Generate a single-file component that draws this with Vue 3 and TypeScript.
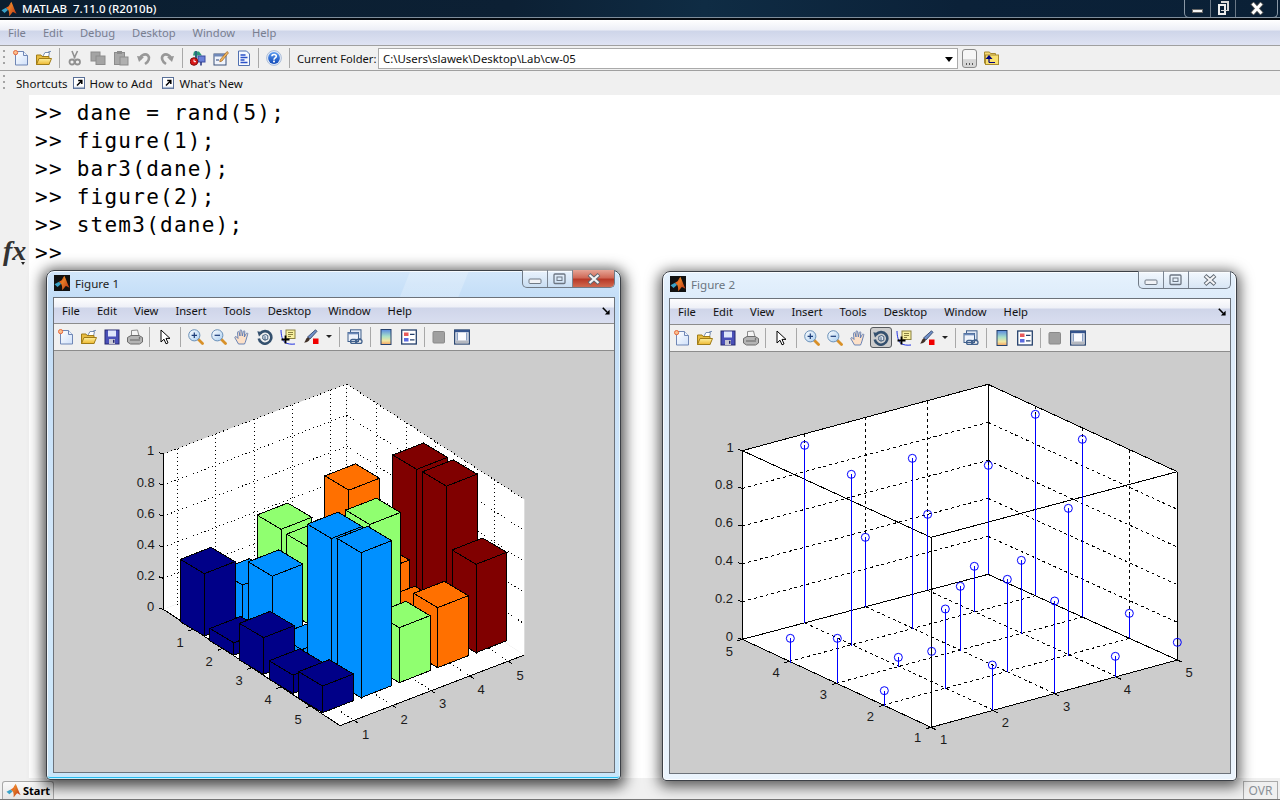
<script setup lang="ts">
type P = [number, number];
interface Tool { k: 'i' | 's' | 'c'; id: string; active?: boolean }

const parseTools = (s: string, active = ''): Tool[] =>
  s.split(' ').map((id) => {
    if (id === '|') return { k: 's', id };
    if (id === 'caret') return { k: 'c', id };
    return { k: 'i', id, active: id === active };
  });

const mainTitle = 'MATLAB  7.11.0 (R2010b)';
const mainTools = parseTools('new open | cut copy paste undo redo | sim guide prof | help |');
const figLine = 'new open save print | arrow | zoomin zoomout hand rotate datatip brush caret | link | cbar legend | hide ptools';
const menuMain = ['File', 'Edit', 'Debug', 'Desktop', 'Window', 'Help'];
const menuFig = ['File', 'Edit', 'View', 'Insert', 'Tools', 'Desktop', 'Window', 'Help'];
const commands = ['>> dane = rand(5);', '>> figure(1);', '>> bar3(dane);', '>> figure(2);', '>> stem3(dane);', '>>'];

const figures = [
  { id: 1, cls: 'fig-one', tools: parseTools(figLine), title: 'Figure 1' },
  { id: 2, cls: 'fig-two', tools: parseTools(figLine, 'rotate'), title: 'Figure 2' },
];

const lerp = (a: P, b: P, t: number): P => [a[0] + (b[0] - a[0]) * t, a[1] + (b[1] - a[1]) * t];
const seg = (a: P, b: P): string => `M${a[0].toFixed(1)} ${a[1].toFixed(1)}L${b[0].toFixed(1)} ${b[1].toFixed(1)}`;
const poly = (...ps: P[]): string => ps.map((p) => p.join(',')).join(' ');

/* ---------- Figure 1: bar3 ---------- */
const colours = ['#000088', '#0090ff', '#90ff70', '#ff7000', '#800000'];
const heights = [
  [187, 37, 110, 55, 80],
  [108, 192, 29, 420, 435],
  [230, 230, 100, 417, 165],
  [60, 360, 172, 108, 180],
  [40, 60, 435, 442, 265],
];
const bars: { top: string; left: string; right: string; fill: string; key: string }[] = [];
for (let v = 4; v >= 0; v--) {
  for (let u = 0; u < 5; u++) {
    const gx = 181 + u * 88.75 + v * 115;
    const gy = 755 + u * 57.5 - v * 45;
    const h = heights[v][u];
    const A: P = [gx, gy - h];
    const B: P = [gx + 72, gy - h + 43];
    const C: P = [gx + 164, gy - h + 7];
    const D: P = [gx + 92, gy - h - 36];
    bars.push({
      key: `${v}-${u}`,
      fill: colours[v],
      top: poly(A, B, C, D),
      left: poly(A, B, [gx + 72, gy + 43], [gx, gy]),
      right: poly(B, C, [gx + 164, gy + 7], [gx + 72, gy + 43]),
    });
  }
}
const L1t: P = [130, 252], B1t: P = [680, 42], R1t: P = [1213, 388];
const L1: P = [130, 718], B1: P = [680, 510], R1: P = [1213, 855], F1: P = [660, 1067];
const walls1 = [poly(L1t, B1t, B1, L1), poly(B1t, R1t, R1, B1), poly(L1, B1, R1, F1)];
const fV = [0.076, 0.285, 0.495, 0.704, 0.913];
const fU = [0.169, 0.335, 0.5, 0.666, 0.832];
let grid1 = '';
for (const f of fV) {
  const a = lerp(L1, B1, f);
  const t = lerp(L1t, B1t, f);
  grid1 += seg(t, a) + seg(a, lerp(F1, R1, f));
}
for (const f of fU) {
  const a = lerp(B1, R1, f);
  const t = lerp(B1t, R1t, f);
  grid1 += seg(t, a) + seg(lerp(L1, F1, f), a);
}
for (let i = 1; i <= 5; i++) {
  const f = i / 5;
  const l = lerp(L1, L1t, f);
  const b = lerp(B1, B1t, f);
  const r = lerp(R1, R1t, f);
  grid1 += seg(l, b) + seg(b, r);
}
grid1 += seg(B1t, B1);
let axis1 = seg(L1t, L1) + seg(L1, F1) + seg(F1, R1);
for (let i = 0; i <= 5; i++) {
  const p = lerp(L1, L1t, i / 5);
  axis1 += seg(p, [p[0] - 12, p[1] - 4]);
}
for (const f of fU) {
  const p = lerp(L1, F1, f);
  axis1 += seg(p, [p[0] - 14, p[1] + 6]);
}
for (const f of fV) {
  const p = lerp(F1, R1, f);
  axis1 += seg(p, [p[0] + 12, p[1] + 8]);
}
const labels1 = [
  ['1', 92, 240], ['0.8', 77, 337], ['0.6', 77, 430], ['0.4', 77, 524], ['0.2', 77, 616], ['0', 92, 708],
  ['1', 180, 817], ['2', 267, 874], ['3', 357, 930], ['4', 444, 987], ['5', 534, 1047],
  ['1', 737, 1092], ['2', 852, 1047], ['3', 968, 1001], ['4', 1083, 958], ['5', 1200, 915],
];

/* ---------- Figure 2: stem3 ---------- */
const L2t: P = [127, 242], B2t: P = [864, 43], R2t: P = [1432, 305], F2t: P = [693, 502];
const L2: P = [127, 808], B2: P = [864, 613], R2: P = [1432, 870], F2: P = [693, 1072];
const walls2 = [poly(L2t, B2t, B2, L2), poly(B2t, R2t, R2, B2), poly(L2, B2, R2, F2)];
let grid2 = '';
for (const [fl, fr] of [[0.2537, 0.25], [0.502, 0.499], [0.754, 0.7465]]) {
  grid2 += seg(lerp(L2t, B2t, fl), lerp(L2, B2, fl)) + seg(lerp(B2t, R2t, fr), lerp(B2, R2, fr));
  grid2 += seg(lerp(L2, B2, fl), lerp(F2, R2, fl)) + seg(lerp(L2, F2, fr), lerp(B2, R2, fr));
}
for (let i = 1; i < 5; i++) {
  const f = i / 5;
  const b = lerp(B2, B2t, f);
  grid2 += seg(lerp(L2, L2t, f), b) + seg(b, lerp(R2, R2t, f));
}
let box2 =
  seg(L2t, B2t) + seg(B2t, R2t) + seg(R2t, F2t) + seg(F2t, L2t) +
  seg(L2, B2) + seg(B2, R2) + seg(R2, F2) + seg(F2, L2) +
  seg(L2t, L2) + seg(B2t, B2) + seg(R2t, R2) + seg(F2t, F2);
for (let i = 0; i <= 5; i++) {
  const p = lerp(L2, L2t, i / 5);
  box2 += seg(p, [p[0] - 14, p[1] - 4]);
}
for (let i = 0; i <= 4; i++) {
  const p = lerp(L2, F2, i / 4);
  box2 += seg(p, [p[0] - 15, p[1] + 4]);
  const q = lerp(F2, R2, i / 4);
  box2 += seg(q, [q[0] + 15, q[1] + 7]);
}
const stems: [number, number, number][] = [
  [314, 226, 760], [454, 313, 828], [496, 502, 712], [637, 265, 778], [683, 433, 660],
  [865, 286, 613], [1006, 133, 675], [1147, 208, 742], [1105, 415, 857], [1064, 693, 970],
  [964, 571, 793], [922, 628, 906], [823, 589, 727], [781, 649, 842], [736, 717, 957],
  [877, 885, 1021], [595, 862, 892], [553, 962, 1007], [412, 805, 940], [271, 805, 878],
  [1288, 730, 805], [1246, 859, 920],
];
const bareMarks: P[] = [[695, 844], [1432, 817]];
const labels2 = [
  ['1', 90, 232], ['0.8', 72, 343], ['0.6', 72, 457], ['0.4', 72, 570], ['0.2', 72, 685], ['0', 88, 798],
  ['5', 88, 843], ['4', 228, 907], ['3', 370, 972], ['2', 511, 1038], ['1', 653, 1102],
  ['1', 731, 1107], ['2', 916, 1057], ['3', 1100, 1008], ['4', 1282, 958], ['5', 1467, 906],
];
</script>

<template>
  <div class="app">
    <svg class="defs" width="0" height="0" aria-hidden="true">
      <defs>
        <linearGradient id="gPage" x1="0" y1="0" x2="1" y2="1"><stop offset="0" stop-color="#ffffff" /><stop offset="1" stop-color="#cfe0fa" /></linearGradient>
        <linearGradient id="gFold" x1="0" y1="0" x2="0" y2="1"><stop offset="0" stop-color="#fdf0a0" /><stop offset="1" stop-color="#eeb830" /></linearGradient>
        <linearGradient id="gCbar" x1="0" y1="0" x2="0" y2="1"><stop offset="0" stop-color="#5a8ae0" /><stop offset=".45" stop-color="#a8e0c8" /><stop offset=".75" stop-color="#f2e6a0" /><stop offset="1" stop-color="#f0a060" /></linearGradient>
        <linearGradient id="gLens" x1="0" y1="0" x2="1" y2="1"><stop offset="0" stop-color="#ffffff" /><stop offset="1" stop-color="#a8cdf0" /></linearGradient>
        <linearGradient id="gHelp" x1="0" y1="0" x2="0" y2="1"><stop offset="0" stop-color="#5c9cf0" /><stop offset="1" stop-color="#1048b8" /></linearGradient>
        <linearGradient id="gPeak" x1="0" y1="0" x2="1" y2="1"><stop offset="0" stop-color="#f8a030" /><stop offset="1" stop-color="#b82a10" /></linearGradient>

        <symbol id="logo" viewBox="0 0 16 16">
          <path d="M0.5 9.3 5 6.8 7.2 8.7 3.6 12Z" fill="#3aa2c8" />
          <path d="M5 6.8 7.6 5.2 10.3 0.8 8.6 9.4 7.2 8.7Z" fill="#e86a20" />
          <path d="M10.3 0.8C11.6 3 13.6 9.4 15.6 12.8 14 12 13 11.2 11.8 11 10.6 12.2 9.4 14.4 8 15.2 8.4 12.8 8.2 11 7.2 8.7 8.6 7 9.4 3.6 10.3 0.8Z" fill="url(#gPeak)" />
        </symbol>

        <symbol id="new" viewBox="0 0 16 16"><path d="M2.5 1.5h8l4 4v9.500h-12z" fill="url(#gPage)" stroke="#6f86b5" /><path d="M10.500 1.500V5.500h4" fill="#eaf1fd" stroke="#6f86b5" /><circle cx="2.600" cy="2.600" r="2.100" fill="#f8c090" stroke="#e8683a" /></symbol>
        <symbol id="open" viewBox="0 0 16 16"><path d="M7 6 9 2.500h4.500L12.500 7" fill="#fff" stroke="#7a90b0" /><path d="M.5 14.500V5h4.500l1 1.500h7V14.500z" fill="#e8bc40" stroke="#a07c18" /><path d="M.5 14.500 3 8.500h12.500L13 14.500z" fill="url(#gFold)" stroke="#a07c18" /><path d="M12 2.500c1-1 2.200-1.400 3-.8" fill="none" stroke="#5878a8" /></symbol>
        <symbol id="save" viewBox="0 0 16 16"><rect x="1" y="1" width="14" height="14" fill="#4a50b8" stroke="#26286e" /><rect x="4" y="1.500" width="8" height="6" fill="#dfe6fb" /><rect x="5" y="10" width="6" height="5" fill="#c8c8d4" /><rect x="9" y="10.800" width="1.500" height="3" fill="#26286e" /></symbol>
        <symbol id="print" viewBox="0 0 16 16"><path d="M4.500 7V1.500l6-.5 1.500 6z" fill="#f4f4f4" stroke="#8a8a8a" /><path d="M.5 8.500 4 6.500h8l3.500 2v4.500l-3 2H3.500l-3-2z" fill="#b4b4b4" stroke="#6c6c6c" /><path d="M3 11h10" stroke="#666" /><circle cx="12.500" cy="9" r=".8" fill="#555" /></symbol>
        <symbol id="cut" viewBox="0 0 16 16"><path d="M5 1l3 7.500M10.500 1 7 8.500" stroke="#909090" stroke-width="1.600" fill="none" /><circle cx="5" cy="12" r="2.500" fill="none" stroke="#909090" stroke-width="1.800" /><circle cx="10.500" cy="12" r="2.500" fill="none" stroke="#909090" stroke-width="1.800" /></symbol>
        <symbol id="copy" viewBox="0 0 16 16"><rect x="1" y="2" width="9" height="9" fill="#a4a4a4" stroke="#8c8c8c" /><rect x="6" y="6" width="9" height="8.500" fill="#a4a4a4" stroke="#8c8c8c" /></symbol>
        <symbol id="paste" viewBox="0 0 16 16"><rect x="1.500" y="2.500" width="10" height="12" fill="#a8a8a8" stroke="#8c8c8c" /><rect x="4" y="1" width="5" height="3" fill="#8c8c8c" /><rect x="7" y="7" width="8" height="8" fill="#b0b0b0" stroke="#8c8c8c" /></symbol>
        <symbol id="undo" viewBox="0 0 16 16"><path d="M5 9.500C3 5.500 9 3 12 5.500c2 2 1 6-3 8.500" fill="none" stroke="#989898" stroke-width="2.600" /><path d="M1 6l7 1-5 5z" fill="#989898" /></symbol>
        <symbol id="redo" viewBox="0 0 16 16"><path d="M11 9.500C13 5.500 7 3 4 5.500c-2 2-1 6 3 8.500" fill="none" stroke="#989898" stroke-width="2.600" /><path d="M15 6l-7 1 5 5z" fill="#989898" /></symbol>
        <symbol id="sim" viewBox="0 0 16 16"><path d="M4 1.500h5l3 4H3z" fill="#2a9a78" /><rect x="5" y="1" width="2" height="8" fill="#2a6a80" /><rect x="8" y="6" width="7" height="6" fill="#6a80d8" stroke="#3a4aa0" /><path d="M11 12v3.500" stroke="#223080" stroke-width="1.500" /><circle cx="4" cy="11.500" r="3.800" fill="#d81818" stroke="#801010" /><path d="M4 9.500v2.200h2" stroke="#fff" fill="none" /></symbol>
        <symbol id="guide" viewBox="0 0 16 16"><rect x="1" y="4" width="12" height="11" fill="#f0f4fc" stroke="#3a5078" /><rect x="1" y="4" width="12" height="2.500" fill="#6f88b8" /><rect x="3" y="9" width="3" height="2" fill="#8a9ab8" /><path d="M7 10 14 1.500l1.500 1.300L9 11l-2.200.8z" fill="#f0b860" stroke="#a0601c" stroke-width=".7" /></symbol>
        <symbol id="prof" viewBox="0 0 16 16"><path d="M2.500 1h8l3 3v11.500h-11z" fill="#f6f9ff" stroke="#5070b0" /><path d="M4.500 5h5M4.500 7.500h7M4.500 10h4M4.500 12.500h7" stroke="#2a50c8" stroke-width="1.500" /></symbol>
        <symbol id="help" viewBox="0 0 16 16"><circle cx="8" cy="8" r="7.400" fill="#e4ecf8" stroke="#9ab0d0" stroke-width=".8" /><circle cx="8" cy="8" r="5.900" fill="url(#gHelp)" /><path d="M5.900 6.200C6 3.900 10.300 3.900 10.300 6.300 10.300 8 8 7.900 8 9.700" fill="none" stroke="#fff" stroke-width="1.600" /><rect x="7.100" y="10.600" width="1.800" height="1.800" fill="#fff" /></symbol>
        <symbol id="arrow" viewBox="0 0 16 16"><path d="M4 1v12l3-2.800 2 4.600 2-.9-2-4.500h4z" fill="#fff" stroke="#000" /></symbol>
        <symbol id="zoomin" viewBox="0 0 16 16"><path d="M10 10 14.500 14.500" stroke="#d89028" stroke-width="2.800" stroke-linecap="round" /><circle cx="6.300" cy="6.300" r="5.600" fill="url(#gLens)" stroke="#6a90b8" /><path d="M3.600 6.300h5.400M6.300 3.600v5.400" stroke="#1c3c78" stroke-width="1.200" /></symbol>
        <symbol id="zoomout" viewBox="0 0 16 16"><path d="M10 10 14.500 14.500" stroke="#d89028" stroke-width="2.800" stroke-linecap="round" /><circle cx="6.300" cy="6.300" r="5.600" fill="url(#gLens)" stroke="#6a90b8" /><path d="M3.600 6.300h5.400" stroke="#1c3c78" stroke-width="1.200" /></symbol>
        <symbol id="hand" viewBox="0 0 16 16"><path d="M4.500 15 1 9c-.6-1.200.8-2 1.700-1L4 9.500 3.500 3.500c0-1.200 1.500-1.200 1.700 0L6 7V1.800c0-1.200 1.600-1.200 1.700 0L8.300 7l1-4.500c.3-1.100 1.700-.8 1.500.3L10.300 8l2-3.500c.6-1 1.900-.4 1.400.7L12 11c-.4 1.700-1 3-1.500 4z" fill="#fce0c8" stroke="#5a78b0" stroke-width=".9" /></symbol>
        <symbol id="rotate" viewBox="0 0 16 16"><path d="M3.200 4.300A6.300 6.300 0 1 1 1.800 9.500" fill="none" stroke="#34506e" stroke-width="2.600" /><path d="M.3 2.300 6 3.200 2 7.400z" fill="#34506e" /><path d="M5.800 6.500 8.800 5.500l2 1.200v3.500l-2.800 1-2.200-1.200z" fill="#dfe8f4" stroke="#34506e" stroke-width=".9" /><path d="M8 7.200v4" stroke="#34506e" stroke-width=".9" /></symbol>
        <symbol id="datatip" viewBox="0 0 16 16"><path d="M1 1c0 5 1.500 11 4 12.500s6 2 10 1.500" fill="none" stroke="#2030e0" /><rect x="6" y="1" width="9" height="8.500" fill="#f8f0a0" stroke="#8a8040" /><path d="M8 3.500h5M8 5.500h5M8 7.500h3" stroke="#8a8040" /><path d="M1.500 10.500h8M5.500 6.500v8" stroke="#000" stroke-width="1.800" /></symbol>
        <symbol id="brush" viewBox="0 0 16 16"><path d="M4.500 8 12.500 .8l1.500 1.500L7 10z" fill="#7090c8" stroke="#283a60" stroke-width=".8" /><path d="M1 13.500c1.500-.5 1.500-4.500 4-5.200l1.800 1.800c-.6 2.600-3.600 3.800-5.800 3.400z" fill="#403028" /><rect x="10" y="9.500" width="5.500" height="5.500" fill="#f00000" /></symbol>
        <symbol id="link" viewBox="0 0 16 16"><rect x="3.500" y=".8" width="10.500" height="9" fill="#dfe7f4" stroke="#40608c" /><rect x="1" y="3.500" width="10.500" height="9" fill="#eef3fb" stroke="#40608c" /><rect x="1" y="3.500" width="10.500" height="1.800" fill="#6a88b8" /><rect x="3.500" y="10.500" width="6.500" height="3.800" rx="1.900" fill="none" stroke="#40608c" stroke-width="1.300" /><rect x="8.500" y="10.500" width="6.500" height="3.800" rx="1.900" fill="none" stroke="#40608c" stroke-width="1.300" /></symbol>
        <symbol id="cbar" viewBox="0 0 16 16"><rect x="3" y=".5" width="10" height="15" fill="url(#gCbar)" stroke="#24406c" /></symbol>
        <symbol id="legend" viewBox="0 0 16 16"><rect x=".7" y="1" width="14.600" height="14" fill="#fff" stroke="#24406c" stroke-width="1.300" /><rect x="3" y="3.500" width="4.500" height="3.500" fill="#e85a5a" /><rect x="3" y="9" width="4.500" height="3.500" fill="#5a6ae0" /><path d="M9 5.300h4.500M9 10.800h4.500" stroke="#24406c" stroke-width="1.200" /></symbol>
        <symbol id="hide" viewBox="0 0 16 16"><rect x="2" y="2.500" width="11.500" height="11.500" rx="1" fill="#a0a0a0" stroke="#8a8a8a" /></symbol>
        <symbol id="ptools" viewBox="0 0 16 16"><rect x=".7" y="1" width="14.600" height="14" fill="#fafbfe" stroke="#24406c" stroke-width="1.300" /><rect x=".7" y="1" width="14.600" height="2.200" fill="#34548e" /><rect x="1.500" y="11.500" width="13" height="3" fill="#b4b8c0" /><rect x="2.500" y="3.500" width="1.500" height="8" fill="#8aa0c4" /><rect x="12" y="3.500" width="1.500" height="8" fill="#8aa0c4" /></symbol>
        <symbol id="up" viewBox="0 0 16 16"><path d="M1.500 13.500V2h5l1 1.500h5v3" fill="#f4d878" stroke="#a88a30" /><rect x="2.500" y="5" width="13" height="9.500" fill="#f8e070" stroke="#a88a30" /><path d="M6 12.500h6M6 12.500V6.500M3.800 8.500 6 6l2.200 2.500z" fill="#000080" stroke="#000080" stroke-width="1.200" /></symbol>
        <symbol id="short" viewBox="0 0 12 12"><rect x=".5" y=".5" width="11" height="11" fill="#fff" stroke="#5a7098" /><rect x="1" y="9.800" width="10" height="1.400" fill="#a8b8d0" /><path d="M4 8.500 8 4.500M5.200 3.500H8.800V7" fill="none" stroke="#000" stroke-width="1.500" /></symbol>
        <symbol id="undock" viewBox="0 0 10 10"><path d="M1 1 6.500 6.500" stroke="#000" stroke-width="2" fill="none" /><path d="M9.500 3.500v6h-6z" fill="#000" /></symbol>
        <symbol id="cmin" viewBox="0 0 16 12"><rect x="2" y="6" width="12" height="4.500" rx="1" fill="#f0f2f6" stroke="#707a86" /></symbol>
        <symbol id="cmax" viewBox="0 0 16 12"><rect x="2" y="1" width="11" height="9.500" rx="1" fill="none" stroke="#6c7682" stroke-width="1.300" /><rect x="5" y="4" width="5" height="3.500" fill="none" stroke="#6c7682" /></symbol>
        <symbol id="cx" viewBox="0 0 16 12"><path d="M3 1.500 13 10.500M13 1.500 3 10.500" stroke="#5e6872" stroke-width="4" /><path d="M3.500 2 12.500 10M12.500 2 3.500 10" stroke="#f4f4f6" stroke-width="2.200" /></symbol>
      </defs>
    </svg>

    <header class="titlebar">
      <svg class="title-logo"><use href="#logo" /></svg>
      <span class="title-text">{{ mainTitle }}</span>
      <div class="win-buttons">
        <span class="wb wb-min"><i></i></span>
        <span class="wb wb-max"><i></i><b></b></span>
        <span class="wb wb-x">
          <svg viewBox="0 0 16 12"><path d="M3 .5 13 11.500M13 .5 3 11.500" stroke="#555" stroke-width="4.500" /><path d="M3.500 1 12.500 11M12.500 1 3.500 11" stroke="#fff" stroke-width="2.800" /></svg>
        </span>
      </div>
    </header>

    <nav class="menubar main-menu">
      <span v-for="m in menuMain" :key="m">{{ m }}</span>
    </nav>

    <div class="toolbar main-tools">
      <span class="grip"></span>
      <template v-for="(t, i) in mainTools" :key="i">
        <span v-if="t.k === 's'" class="sep"></span>
        <span v-else class="tool"><svg class="ic"><use :href="'#' + t.id" /></svg></span>
      </template>
      <span class="folder-label">Current Folder:</span>
      <div class="combo">
        <span>C:\Users\slawek\Desktop\Lab\cw-05</span>
        <i class="combo-arrow"></i>
      </div>
      <button class="dots" type="button"><i></i></button>
      <svg class="ic up-icon"><use href="#up" /></svg>
    </div>

    <div class="shortcuts">
      <span class="grip"></span>
      <span class="sc-first">Shortcuts</span>
      <svg class="sc-ic"><use href="#short" /></svg>
      <span>How to Add</span>
      <svg class="sc-ic sc-gap"><use href="#short" /></svg>
      <span>What's New</span>
    </div>

    <main class="body">
      <aside class="gutter">
        <span class="fx">fx</span>
        <i class="fx-caret"></i>
      </aside>
      <section class="cmd">
        <div v-for="(c, i) in commands" :key="i" class="cmd-line">{{ c }}</div>
      </section>
    </main>

    <footer class="status">
      <button class="start" type="button">
        <svg class="start-logo"><use href="#logo" /></svg>
        <span>Start</span>
      </button>
      <span class="ovr">OVR</span>
    </footer>

    <article v-for="f in figures" :key="f.id" class="fig" :class="f.cls">
      <div class="fig-title">
        <span class="fig-logo"><svg><use href="#logo" /></svg></span>
        <span class="fig-name">{{ f.title }}</span>
      </div>
      <div class="caption">
        <span class="cap"><svg><use href="#cmin" /></svg></span>
        <span class="cap"><svg><use href="#cmax" /></svg></span>
        <span class="cap cap-close"><svg><use href="#cx" /></svg></span>
      </div>
      <div class="client">
        <nav class="menubar fig-menu">
          <span v-for="m in menuFig" :key="m">{{ m }}</span>
          <svg class="undock"><use href="#undock" /></svg>
        </nav>
        <div class="toolbar fig-tools">
          <template v-for="(t, i) in f.tools" :key="i">
            <span v-if="t.k === 's'" class="sep"></span>
            <span v-else-if="t.k === 'c'" class="caret"><i></i></span>
            <span v-else class="tool" :class="{ active: t.active }"><svg class="ic"><use :href="'#' + t.id" /></svg></span>
          </template>
        </div>
        <div class="plot">
          <svg v-if="f.id === 1" class="plot-svg" viewBox="-198 -57 1680 1263">
            <polygon v-for="(w, i) in walls1" :key="i" :points="w" fill="#fff" />
            <path :d="grid1" class="dotted" />
            <path :d="axis1" class="solid" />
            <g v-for="b in bars" :key="b.key" class="bar" :fill="b.fill">
              <polygon :points="b.left" />
              <polygon :points="b.right" />
              <polygon :points="b.top" />
            </g>
            <text v-for="(l, i) in labels1" :key="i" :x="l[1]" :y="l[2]" class="tick">{{ l[0] }}</text>
          </svg>
          <svg v-else class="plot-svg" viewBox="-90 -54 1680 1263">
            <polygon v-for="(w, i) in walls2" :key="i" :points="w" fill="#fff" />
            <path :d="grid2" class="dashed" />
            <path :d="box2" class="solid" />
            <line v-for="(s, i) in stems" :key="i" :x1="s[0]" :y1="s[1]" :x2="s[0]" :y2="s[2]" class="stem" />
            <circle v-for="(s, i) in stems" :key="'m' + i" :cx="s[0]" :cy="s[1]" r="12" class="mark" />
            <circle v-for="(m, i) in bareMarks" :key="'b' + i" :cx="m[0]" :cy="m[1]" r="12" class="mark" />
            <text v-for="(l, i) in labels2" :key="i" :x="l[1]" :y="l[2]" class="tick">{{ l[0] }}</text>
          </svg>
        </div>
      </div>
    </article>
  </div>
</template>

<style>
html, body { margin: 0; padding: 0; background: #fff; overflow: hidden; }
</style>

<style scoped>
.app {
  position: relative;
  width: 1280px;
  height: 800px;
  overflow: hidden;
  display: flex;
  flex-direction: column;
  background: #f0f0f0;
  font-family: "Noto Sans", "Open Sans", sans-serif;
  font-size: 11.2px;
  color: #111;
}
.defs { position: absolute; }

/* main window chrome */
.titlebar {
  position: relative;
  flex: none;
  height: 20px;
  box-sizing: border-box;
  border-bottom: 2px solid #050a10;
  box-shadow: inset 0 -1px 0 #7f8e9c;
  background: linear-gradient(90deg, #0a1e30 0, #0c2034 40%, #0f2c44 55%, #0b2138 75%, #0a2036 100%);
  display: flex;
  align-items: center;
  color: #fff;
}
.title-logo { width: 16px; height: 16px; margin-left: 1px; }
.title-text {
  margin-left: 5px;
  font-size: 11.5px;
  font-weight: 500;
  white-space: pre;
  line-height: 18px;
}
.win-buttons {
  position: absolute;
  right: 2px;
  top: 0;
  width: 94px;
  height: 18px;
  box-sizing: border-box;
  border: 1px solid #8a98a6;
  border-top: 0;
  border-radius: 0 0 5px 5px;
  display: grid;
  grid-template-columns: 26px 25px 1fr;
}
.wb { position: relative; border-right: 1px solid #6a7886; }
.wb-x { border-right: 0; }
.wb-min i { position: absolute; left: 7px; top: 9px; width: 11px; height: 4px; background: #f4f4f4; border: 1px solid #666; box-sizing: border-box; }
.wb-max i { position: absolute; left: 7px; top: 4px; width: 8px; height: 11px; border: 2px solid #eee; box-sizing: border-box; background: #0a2036; }
.wb-max b { position: absolute; left: 10px; top: 1px; width: 8px; height: 10px; border: 2px solid #d8d8d8; border-left-width: 0; border-bottom-width: 1px; box-sizing: border-box; }
.wb-x svg { position: absolute; left: 13px; top: 2px; width: 16px; height: 13px; }

.menubar { flex: none; display: flex; align-items: center; gap: 17px; }
.main-menu {
  height: 26px;
  box-sizing: border-box;
  padding-left: 8px;
  color: #787e90;
  border-bottom: 1px solid #a0a0a0;
  background: linear-gradient(#ffffff 0, #eceef6 10px, #ced5e9 11px, #dfe3f3 100%);
}
.toolbar { display: flex; align-items: center; flex: none; }
.main-tools {
  height: 25px;
  box-sizing: border-box;
  padding-left: 9.5px;
  border-bottom: 1px solid #a0a0a0;
  background: #f0f0f0;
  position: relative;
}
.grip {
  position: absolute;
  left: 3px;
  width: 2px;
  height: 16px;
  background: repeating-linear-gradient(#a4a4a4 0 2px, transparent 2px 6px);
}
.tool {
  width: 23px;
  height: 100%;
  flex: none;
  display: flex;
  align-items: center;
  justify-content: center;
  position: relative;
}
.ic { width: 16px; height: 16px; display: block; }
.sep {
  width: 1px;
  height: 20px;
  flex: none;
  background: #a8a8a8;
  margin: 0 3.4px;
}
.folder-label { margin-left: 3.4px; white-space: nowrap; width: 81px; flex: none; }
.combo {
  width: 580px;
  height: 21px;
  box-sizing: border-box;
  flex: none;
  border: 1px solid #aaa;
  background: #fff;
  display: flex;
  align-items: center;
  padding-left: 4px;
  position: relative;
  font-size: 11.4px;
}
.combo-arrow {
  position: absolute;
  right: 4px;
  top: 8px;
  border: 4px solid transparent;
  border-top: 5px solid #000;
  border-bottom: 0;
}
.dots {
  width: 15px;
  height: 19px;
  margin-left: 4px;
  padding: 0;
  flex: none;
  border: 1px solid #8a8a8a;
  border-radius: 3px;
  background: linear-gradient(#f6f6f6 0 55%, #d6d6d6 56%);
  position: relative;
}
.dots i {
  position: absolute;
  left: 3px;
  top: 13px;
  width: 7px;
  height: 2px;
  background: repeating-linear-gradient(90deg, #555 0 1.5px, transparent 1.5px 3px);
}
.up-icon { margin-left: 6px; }

.shortcuts {
  position: relative;
  flex: none;
  height: 24px;
  display: flex;
  align-items: center;
  padding-left: 16px;
  background: #f0f0f0;
  white-space: nowrap;
  font-size: 11.5px;
}
.sc-ic { width: 12px; height: 12px; margin: 0 5px 0 5px; flex: none; }
.sc-gap { margin-left: 10px; }

.body { flex: 1; display: flex; min-height: 0; }
.gutter { width: 29px; flex: none; position: relative; background: #f0f0f0; }
.fx {
  position: absolute;
  left: 3px;
  top: 140px;
  font-family: "Liberation Serif", serif;
  font-style: italic;
  font-weight: 700;
  font-size: 28px;
  line-height: 32px;
  color: #333;
}
.fx-caret {
  position: absolute;
  left: 21px;
  top: 167px;
  border: 2.5px solid transparent;
  border-top: 3px solid #222;
  border-bottom: 0;
}
.cmd {
  flex: 1;
  background: #fff;
  padding: 4px 0 0 6px;
  font-family: "DejaVu Sans Mono", monospace;
  font-size: 21px;
  letter-spacing: 1.25px;
  line-height: 28px;
  color: #000;
  white-space: pre;
}
.status {
  position: relative;
  flex: none;
  height: 22px;
  box-sizing: border-box;
  border-bottom: 1px solid #777;
  background: #f0f0f0;
  display: flex;
  align-items: flex-end;
  justify-content: space-between;
  padding: 0 2px;
}
.start {
  height: 18px;
  width: 52px;
  padding: 0 0 0 3px;
  box-sizing: border-box;
  display: flex;
  align-items: center;
  gap: 2px;
  font: 700 11px "Noto Sans", sans-serif;
  color: #000;
  border: 1px solid #a8a8a8;
  border-bottom: 0;
  border-radius: 3px 3px 0 0;
  background: linear-gradient(#fafafa, #e6e6e6);
}
.start-logo { width: 15px; height: 15px; flex: none; }
.ovr {
  width: 35px;
  height: 18px;
  box-sizing: border-box;
  border: 1px solid #aaa;
  border-bottom: 0;
  color: #8a8f96;
  font-size: 12px;
  text-align: center;
  line-height: 18px;
}

/* figure windows */
.fig {
  position: absolute;
  width: 575px;
  height: 510px;
  box-sizing: border-box;
  padding: 26px 5px 6px 6px;
  border: 1px solid #3c4046;
  border-radius: 8px 8px 4px 4px;
  box-shadow: inset 0 0 0 1px rgba(255, 255, 255, .75), 0 3px 14px 3px rgba(0, 0, 0, .62);
}
.fig-one {
  left: 46px;
  top: 270px;
  background:
    linear-gradient(112deg, transparent 0 62%, rgba(255, 255, 255, .22) 62.2% 72%, transparent 72.2%) no-repeat 0 0 / 100% 30px,
    linear-gradient(#d2e6fa 0, #c2ddf7 30px, #d4e8fa 60%, #c8e6fa 100%);
  box-shadow: inset 0 0 0 1px rgba(255, 255, 255, .75), inset 0 -2px 0 #26bdf0, inset -1px 0 0 #9fdcf6, 0 3px 14px 4px rgba(0, 0, 0, .68);
}
.fig-two {
  left: 662px;
  top: 271px;
  background: linear-gradient(#e6f2fd 0, #dcebfa 30px, #ebf4fd 100%);
}
.fig-title {
  position: absolute;
  left: 7px;
  top: 4px;
  display: flex;
  align-items: center;
  height: 16px;
}
.fig-logo { width: 16px; height: 16px; background: #111; display: block; }
.fig-logo svg { width: 16px; height: 16px; display: block; }
.fig-name { margin-left: 5px; font-size: 11.6px; color: #222; }
.fig-two .fig-name { color: #6a7580; }
.caption {
  position: absolute;
  top: -1px;
  right: 5px;
  width: 93px;
  height: 18px;
  box-sizing: border-box;
  display: grid;
  grid-template-columns: 25px 25px 1fr;
  border: 1px solid #707a86;
  border-top: 0;
  border-radius: 0 0 5px 5px;
  overflow: hidden;
  background: linear-gradient(rgba(255, 255, 255, .55), rgba(200, 215, 232, .35));
}
.cap { display: flex; align-items: center; justify-content: center; border-right: 1px solid #7c8692; }
.cap svg { width: 16px; height: 12px; display: block; }
.cap-close { border-right: 0; }
.fig-one .cap-close { background: linear-gradient(#e6a596 0, #d06a58 45%, #b83a28 55%, #d06a50 100%); }

.client {
  height: 100%;
  box-sizing: border-box;
  border: 1px solid #6c727a;
  background: #f0f0f0;
  display: flex;
  flex-direction: column;
}
.fig-menu {
  position: relative;
  height: 26px;
  box-sizing: border-box;
  padding-left: 8px;
  border-bottom: 1px solid #8c8c8c;
  color: #111;
  background: linear-gradient(#fdfdfe 0, #eef0f7 9px, #cfd5e9 10px, #d9def0 100%);
}
.undock { position: absolute; right: 4px; top: 9px; width: 8px; height: 8px; }
.fig-tools {
  height: 27px;
  box-sizing: border-box;
  border-bottom: 1px solid #8c8c8c;
  background: #f0f0f0;
}
.tool.active::before {
  content: "";
  position: absolute;
  left: 0;
  top: 2px;
  width: 22px;
  height: 21px;
  box-sizing: border-box;
  border: 1px solid #55595e;
  border-radius: 3px;
  background: #cdcdcd;
}
.tool.active .ic { position: relative; }
.caret { width: 13px; height: 100%; flex: none; position: relative; }
.caret i {
  position: absolute;
  left: 3px;
  top: 11px;
  border: 3px solid transparent;
  border-top: 3px solid #222;
  border-bottom: 0;
}
.plot { flex: 1; min-height: 0; background: #cccccc; }
.plot-svg { display: block; width: 100%; height: 100%; }
.dotted { fill: none; stroke: #000; stroke-width: 3; stroke-dasharray: 3 9; shape-rendering: crispEdges; }
.dashed { fill: none; stroke: #000; stroke-width: 3; stroke-dasharray: 9 9; shape-rendering: crispEdges; }
.solid { fill: none; stroke: #000; stroke-width: 3; shape-rendering: crispEdges; }
.bar polygon { stroke: #000; stroke-width: 3; shape-rendering: crispEdges; }
.stem { stroke: #0000ff; stroke-width: 3; shape-rendering: crispEdges; }
.mark { fill: none; stroke: #0000ff; stroke-width: 3; }
.tick {
  font-family: "Liberation Sans", sans-serif;
  font-size: 39px;
  text-anchor: middle;
  dominant-baseline: central;
  fill: #1a1a1a;
}
</style>
